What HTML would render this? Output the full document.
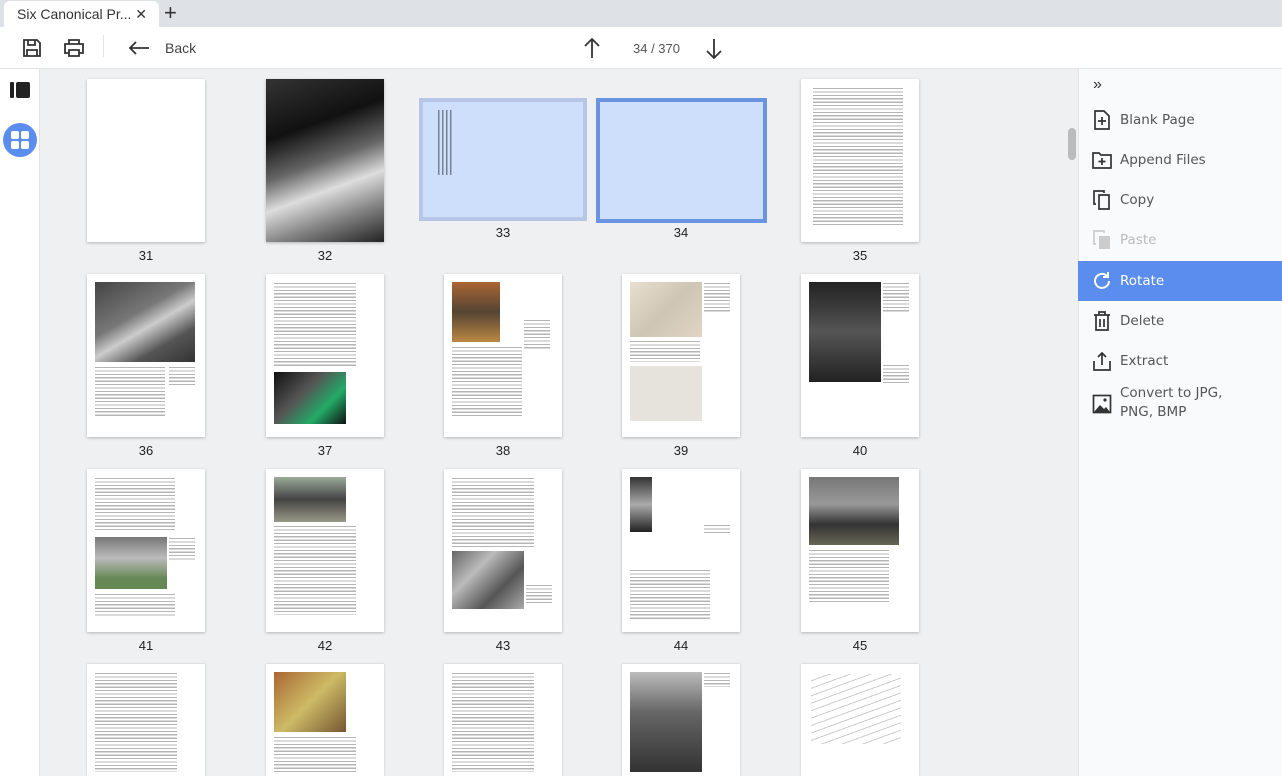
<!DOCTYPE html>
<html style="overflow:hidden;width:1282px;height:776px"><head><meta charset="utf-8"><style>
*{margin:0;padding:0;box-sizing:border-box}
body{width:1282px;height:776px;overflow:hidden;background:#eef0f2;font-family:"Liberation Sans",sans-serif;position:relative;color:#333}
#w{position:absolute;left:0;top:0;width:1282px;height:776px;overflow:hidden}
.a{position:absolute}
.pg{position:absolute;background:#fff;box-shadow:0 1px 3px rgba(0,0,0,.25);width:118px;height:163px;overflow:hidden}
.pg.l{height:112px;box-shadow:0 0 2px rgba(0,0,0,.2)}
.t{position:absolute;background:repeating-linear-gradient(#fff 0 1px,#b5b5b5 1px 2.2px,#fff 2.2px 3.4px)}
.ph{position:absolute}
.lb{position:absolute;width:118px;text-align:center;font-size:13px;color:#222}
.mi{position:absolute;left:1078px;width:204px;height:40px;color:#555;padding-left:42px;line-height:40px;font-family:"DejaVu Sans",sans-serif;font-size:13.5px}
.mi svg{position:absolute;left:14px;top:10px}
</style></head><body><div id="w">
<div class="a" style="left:0;top:0;width:1282px;height:27px;background:#dee1e6"></div>
<div class="a" style="left:4px;top:1px;width:155px;height:26px;background:#fff;border-radius:6px 6px 0 0"></div>
<div class="a" style="left:17px;top:6px;font-size:14px;color:#333">Six Canonical Pr... ✕</div>
<div class="a" style="left:164px;top:0px;font-size:22px;color:#333">+</div>
<div class="a" style="left:0;top:27px;width:1282px;height:42px;background:#fff;border-bottom:1px solid #e3e3e3"></div>
<svg class="a" style="left:22px;top:38px" width="20" height="20" viewBox="0 0 20 20" fill="none" stroke="#333" stroke-width="1.8"><path d="M2 2h13l3 3v13H2z"/><path d="M6 2v5h7V2M5 18v-6h10v6"/></svg>
<svg class="a" style="left:63px;top:38px" width="22" height="20" viewBox="0 0 22 20" fill="none" stroke="#333" stroke-width="1.8"><path d="M6 6V2h10v4M6 15H2V6h18v9h-4"/><path d="M6 12h10v6H6z"/></svg>
<div class="a" style="left:103px;top:35px;width:1px;height:22px;background:#e5e5e5"></div>
<svg class="a" style="left:128px;top:40px" width="22" height="16" viewBox="0 0 22 16" fill="none" stroke="#333" stroke-width="1.8"><path d="M21 8H2M8 2L2 8l6 6"/></svg>
<div class="a" style="left:165px;top:40px;font-size:14px;color:#444">Back</div>
<svg class="a" style="left:583px;top:37px" width="18" height="22" viewBox="0 0 18 22" fill="none" stroke="#333" stroke-width="1.8"><path d="M9 21V2M2 9l7-7 7 7"/></svg>
<div class="a" style="left:633px;top:41px;font-size:13px;color:#555">34 / 370</div>
<svg class="a" style="left:705px;top:38px" width="18" height="22" viewBox="0 0 18 22" fill="none" stroke="#333" stroke-width="1.8"><path d="M9 1v19M2 13l7 7 7-7"/></svg>
<div class="a" style="left:0;top:69px;width:40px;height:707px;background:#fff;border-right:1px solid #e3e3e3"></div>
<div class="a" style="left:10px;top:82px;width:4px;height:16px;background:#222;border-radius:1px"></div>
<div class="a" style="left:16px;top:82px;width:14px;height:16px;background:#222;border-radius:2px"></div>
<div class="a" style="left:3px;top:123px;width:34px;height:34px;border-radius:50%;background:#5b8def"></div>
<div class="a" style="left:11px;top:131px;width:8px;height:8px;background:#fff;border-radius:2px"></div>
<div class="a" style="left:21px;top:131px;width:8px;height:8px;background:#fff;border-radius:2px"></div>
<div class="a" style="left:11px;top:141px;width:8px;height:8px;background:#fff;border-radius:2px"></div>
<div class="a" style="left:21px;top:141px;width:8px;height:8px;background:#fff;border-radius:2px"></div>
<div class="a" style="left:1068px;top:128px;width:8px;height:32px;background:#bbb;border-radius:4px"></div>
<div class="a" style="left:1078px;top:69px;width:204px;height:707px;background:#f9fafb;border-left:1px solid #e3e3e3"></div>
<div class="a" style="left:1093px;top:76px;font-size:16px;color:#333">»</div>
<div class="mi" style="top:100px"><svg width="20" height="20" viewBox="0 0 20 20" fill="none" stroke="#333" stroke-width="1.7"><path d="M3 1h9l5 5v13H3z"/><path d="M10 7v8M6 11h8"/></svg>Blank Page</div>
<div class="mi" style="top:140px"><svg width="20" height="20" viewBox="0 0 20 20" fill="none" stroke="#333" stroke-width="1.7"><path d="M1 3h6l2 2h10v13H1z"/><path d="M10 8v7M6.5 11.5h7"/></svg>Append Files</div>
<div class="mi" style="top:180px"><svg width="20" height="20" viewBox="0 0 20 20" fill="none" stroke="#333" stroke-width="1.7"><path d="M4 14H2V1h10v2"/><path d="M7 5h10v14H7z"/></svg>Copy</div>
<div class="mi" style="top:220px;color:#bbb"><svg width="20" height="20" viewBox="0 0 20 20"><path d="M4 14H2V1h10v2" fill="none" stroke="#ccc" stroke-width="1.7"/><rect x="7" y="6" width="11" height="13" fill="#ccc"/></svg>Paste</div>
<div class="mi" style="top:261px;background:#5b8def;color:#fff"><svg width="20" height="20" viewBox="0 0 20 20" fill="none" stroke="#fff" stroke-width="2"><path d="M17 10a7 7 0 1 1-2-5"/><path d="M16 1v5h-5"/></svg>Rotate</div>
<div class="mi" style="top:301px"><svg width="20" height="20" viewBox="0 0 20 20" fill="none" stroke="#333" stroke-width="1.7"><path d="M2 4h16M7 4V1h6v3M4 4v15h12V4M8 8v8M12 8v8"/></svg>Delete</div>
<div class="mi" style="top:341px"><svg width="20" height="20" viewBox="0 0 20 20" fill="none" stroke="#333" stroke-width="1.7"><path d="M2 10v9h16v-9M10 14V2M6 6l4-4 4 4"/></svg>Extract</div>
<div class="mi" style="top:382px;line-height:19px;padding-top:2px"><svg width="20" height="20" viewBox="0 0 20 20" style="top:12px"><rect x="1.5" y="1.5" width="17" height="17" fill="none" stroke="#333" stroke-width="1.7"/><path d="M2 18l6-7 4 4 2-2 4 5z" fill="#333"/><circle cx="13" cy="6" r="1.6" fill="#333"/></svg>Convert to JPG,<br>PNG, BMP</div>

<div class="pg" style="left:87px;top:79px"></div>
<div class="pg" style="left:266px;top:79px;background:linear-gradient(160deg,#333,#111 30%,#666 50%,#ddd 65%,#888 80%,#222)"></div>
<div class="a" style="left:419px;top:98px;width:168px;height:123px;background:#cddffa;border:4px solid #b7c6e6"></div>
<div class="a" style="left:438px;top:110px;width:16px;height:65px;background:repeating-linear-gradient(90deg,#223 0 1.5px,transparent 1.5px 4px);opacity:.5"></div>
<div class="a" style="left:596px;top:98px;width:171px;height:125px;background:#cddffa;border:4px solid #6b94e0"></div>
<div class="pg" style="left:801px;top:79px"><div class="t" style="left:12px;top:8px;width:90px;height:140px"></div></div>
<div class="lb" style="left:87px;top:248px">31</div>
<div class="lb" style="left:266px;top:248px">32</div>
<div class="lb" style="left:444px;top:225px">33</div>
<div class="lb" style="left:622px;top:225px">34</div>
<div class="lb" style="left:801px;top:248px">35</div>

<div class="pg" style="left:87px;top:274px"><div class="ph" style="left:8px;top:8px;width:100px;height:80px;background:linear-gradient(150deg,#444,#777 40%,#ccc 55%,#555 75%,#333)"></div><div class="t" style="left:8px;top:92px;width:70px;height:50px"></div><div class="t" style="left:82px;top:92px;width:26px;height:20px"></div></div>
<div class="pg" style="left:266px;top:274px"><div class="t" style="left:8px;top:8px;width:82px;height:85px"></div><div class="ph" style="left:8px;top:98px;width:72px;height:52px;background:linear-gradient(135deg,#111,#555 40%,#2a6 70%,#111)"></div></div>
<div class="pg" style="left:444px;top:274px"><div class="ph" style="left:8px;top:8px;width:48px;height:60px;background:linear-gradient(#a63,#543 50%,#b84)"></div><div class="t" style="left:8px;top:72px;width:70px;height:70px"></div><div class="t" style="left:80px;top:45px;width:26px;height:30px"></div></div>
<div class="pg" style="left:622px;top:274px"><div class="ph" style="left:8px;top:8px;width:72px;height:55px;background:linear-gradient(135deg,#e8dfd0,#cfc5b5 50%,#e0d5c5)"></div><div class="t" style="left:82px;top:8px;width:26px;height:30px"></div><div class="t" style="left:8px;top:66px;width:70px;height:22px"></div><div class="ph" style="left:8px;top:92px;width:72px;height:55px;background:#e6e3dc"></div></div>
<div class="pg" style="left:801px;top:274px"><div class="ph" style="left:8px;top:8px;width:72px;height:100px;background:linear-gradient(#222,#555 50%,#222)"></div><div class="t" style="left:82px;top:8px;width:26px;height:30px"></div><div class="t" style="left:82px;top:90px;width:26px;height:20px"></div></div>
<div class="lb" style="left:87px;top:443px">36</div>
<div class="lb" style="left:266px;top:443px">37</div>
<div class="lb" style="left:444px;top:443px">38</div>
<div class="lb" style="left:622px;top:443px">39</div>
<div class="lb" style="left:801px;top:443px">40</div>

<div class="pg" style="left:87px;top:469px"><div class="t" style="left:8px;top:8px;width:80px;height:55px"></div><div class="ph" style="left:8px;top:68px;width:72px;height:52px;background:linear-gradient(#777,#bbb 40%,#685 80%)"></div><div class="t" style="left:82px;top:68px;width:26px;height:25px"></div><div class="t" style="left:8px;top:124px;width:80px;height:25px"></div></div>
<div class="pg" style="left:266px;top:469px"><div class="ph" style="left:8px;top:8px;width:72px;height:45px;background:linear-gradient(#9a9,#444 50%,#998)"></div><div class="t" style="left:8px;top:56px;width:82px;height:90px"></div></div>
<div class="pg" style="left:444px;top:469px"><div class="t" style="left:8px;top:8px;width:82px;height:70px"></div><div class="ph" style="left:8px;top:82px;width:72px;height:58px;background:linear-gradient(135deg,#666,#bbb,#555,#aaa)"></div><div class="t" style="left:82px;top:115px;width:26px;height:20px"></div></div>
<div class="pg" style="left:622px;top:469px"><div class="ph" style="left:8px;top:8px;width:22px;height:55px;background:linear-gradient(#333,#aaa,#222)"></div><div class="t" style="left:82px;top:55px;width:26px;height:10px"></div><div class="t" style="left:8px;top:100px;width:80px;height:50px"></div></div>
<div class="pg" style="left:801px;top:469px"><div class="ph" style="left:8px;top:8px;width:90px;height:68px;background:linear-gradient(#777,#999 40%,#333 70%,#665)"></div><div class="t" style="left:8px;top:80px;width:80px;height:55px"></div></div>
<div class="lb" style="left:87px;top:638px">41</div>
<div class="lb" style="left:266px;top:638px">42</div>
<div class="lb" style="left:444px;top:638px">43</div>
<div class="lb" style="left:622px;top:638px">44</div>
<div class="lb" style="left:801px;top:638px">45</div>

<div class="pg l" style="left:87px;top:664px"><div class="t" style="left:8px;top:8px;width:82px;height:100px"></div></div>
<div class="pg l" style="left:266px;top:664px"><div class="ph" style="left:8px;top:8px;width:72px;height:60px;background:linear-gradient(135deg,#a63,#cb6,#753)"></div><div class="t" style="left:8px;top:72px;width:82px;height:36px"></div></div>
<div class="pg l" style="left:444px;top:664px"><div class="t" style="left:8px;top:8px;width:82px;height:100px"></div></div>
<div class="pg l" style="left:622px;top:664px"><div class="ph" style="left:8px;top:8px;width:72px;height:100px;background:linear-gradient(#bbb,#666 40%,#333)"></div><div class="t" style="left:82px;top:8px;width:26px;height:15px"></div></div>
<div class="pg l" style="left:801px;top:664px"><div class="ph" style="left:10px;top:10px;width:90px;height:70px;background:repeating-linear-gradient(160deg,#fff 0 6px,#ccc 6px 7px)"></div></div>
</div></body></html>
